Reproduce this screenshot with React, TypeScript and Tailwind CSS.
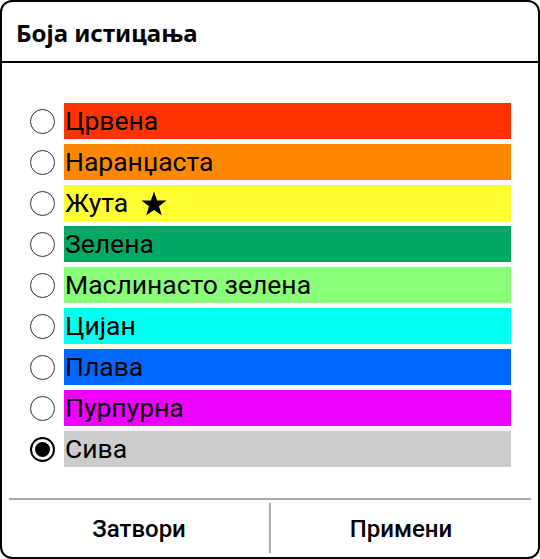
const colors = [
  { name: "Црвена", bg: "bg-[#ff3300]" },
  { name: "Наранџаста", bg: "bg-[#ff8800]" },
  { name: "Жута", bg: "bg-[#ffff33]", star: true },
  { name: "Зелена", bg: "bg-[#00aa66]" },
  { name: "Маслинасто зелена", bg: "bg-[#88ff77]" },
  { name: "Цијан", bg: "bg-[#00ffee]" },
  { name: "Плава", bg: "bg-[#0066ff]" },
  { name: "Пурпурна", bg: "bg-[#ee00ff]" },
  { name: "Сива", bg: "bg-[#cccccc]", selected: true },
];

const Radio = ({ checked }: { checked?: boolean }) => (
  <div
    className={`w-[25px] h-[25px] shrink-0 rounded-full flex items-center justify-center bg-white ${
      checked ? "border-[2px] border-black" : "border-[1.5px] border-[#333]"
    }`}
  >
    {checked && <div className="w-[15px] h-[15px] rounded-full bg-black" />}
  </div>
);

// filled five-point star
const Star = () => (
  <svg width="26" height="25" viewBox="0 0 26 25" className="ml-[13px] shrink-0">
    <path d="M13 0.5 L16.1 9.4 L25.5 9.5 L18 15.2 L20.7 24.3 L13 18.9 L5.3 24.3 L8 15.2 L0.5 9.5 L9.9 9.4 Z" fill="black" />
  </svg>
);

export default function App() {
  return (
    <div className="w-[540px] h-[559px] bg-white" style={{ fontFamily: "Roboto, 'Noto Sans', sans-serif" }}>
      <div className="w-full h-full flex flex-col border-2 border-black rounded-[12px] overflow-hidden">
        <div className="h-[61px] shrink-0 border-b-2 border-black flex items-center px-[14px]">
          <h1 className="text-[24px] font-bold text-black leading-none pt-[3px] font-['Noto_Sans',sans-serif]">
            Боја истицања
          </h1>
        </div>

        <div className="flex-1 flex flex-col gap-[5px] pt-[40px] pl-[28px] pr-[27px]">
          {colors.map((c) => (
            <div key={c.name} className="flex items-center gap-[9px] h-[36px]">
              <Radio checked={c.selected} />
              <div className={`flex-1 h-full flex items-center pl-[1px] ${c.bg}`}>
                <span className="text-[26.5px] text-black leading-none pt-[1px]">{c.name}</span>
                {c.star && <Star />}
              </div>
            </div>
          ))}
        </div>

        <div className="mx-[7px] border-t-2 border-[#aaa] h-[59px] shrink-0 flex">
          <button className="flex-1 flex items-center justify-center text-[24px] font-medium text-black">Затвори</button>
          <div className="w-[2px] bg-[#aaa] my-[3px] mb-[4px]" />
          <button className="flex-1 flex items-center justify-center text-[24px] font-medium text-black">Примени</button>
        </div>
      </div>
    </div>
  );
}
